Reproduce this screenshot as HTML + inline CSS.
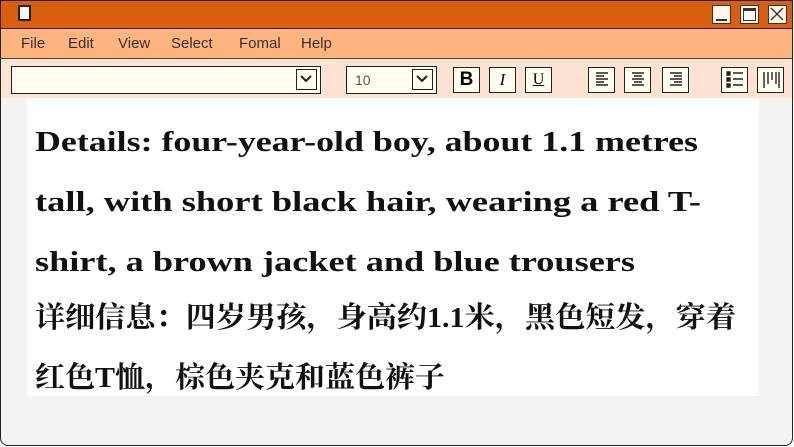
<!DOCTYPE html>
<html><head><meta charset="utf-8"><style>
body{margin:0;width:794px;height:447px;overflow:hidden;background:#fff;font-family:"Liberation Sans",sans-serif}
.win{position:absolute;left:0;top:0;width:791px;height:444px;border:1.5px solid #222;border-radius:0 0 8px 8px;background:#f3f3f1;overflow:hidden}
.title{position:absolute;left:0;top:0;right:0;height:27px;background:#d95f0e;border-bottom:1.5px solid #3a1a05}
.menu{position:absolute;left:0;top:28px;right:0;height:29px;background:#fdb47f;border-bottom:1.5px solid #6a3a1a;font-size:15px;color:#333}
.menu span{position:absolute;top:6px}
.tool{position:absolute;left:0;top:59px;right:0;height:38px;background:#fde3d3}
.box{position:absolute;border:1.5px solid #222;background:#fffff0;box-sizing:border-box}
.btn{position:absolute;top:66px;width:27px;height:26px;border:1.5px solid #222;background:#fffff0;box-sizing:border-box;text-align:center;font-size:17px;line-height:23px}
.wb{position:absolute;top:4px;width:19px;height:19px;background:#fff7ea;border:1.5px solid #333;box-sizing:border-box}
.panel{position:absolute;left:26px;top:97px;width:732px;height:298px;background:#fff}
</style></head><body>
<div class="win">
<div class="title">
<div style="position:absolute;left:17px;top:4px;width:13px;height:16px;background:#fff7e8;border:2px solid #222;border-radius:2px 0 1px 1px;box-sizing:border-box"></div>
<div class="wb" style="left:711px"><div style="position:absolute;left:3px;right:3px;bottom:2px;height:2px;background:#333"></div></div>
<div class="wb" style="left:739px"><div style="position:absolute;left:2px;right:2px;top:2px;height:3px;background:#333"></div><div style="position:absolute;left:2px;right:2px;top:2px;bottom:2px;border:1.5px solid #333"></div></div>
<div class="wb" style="left:767px"><svg width="16" height="16" style="position:absolute;left:0;top:0"><path d="M2 2L14 14M14 2L2 14" stroke="#333" stroke-width="1.3"/></svg></div>
</div>
<div class="menu"><span style="left:20px">File</span><span style="left:67px">Edit</span><span style="left:117px">View</span><span style="left:170px">Select</span><span style="left:238px">Fomal</span><span style="left:300px">Help</span></div>
<div class="tool"></div>
<div class="box" style="left:10px;top:65px;width:310px;height:28px"></div>
<div class="box" style="left:295px;top:68px;width:21px;height:21px"><svg width="18" height="18"><path d="M4 6L9 11L14 6" fill="none" stroke="#222" stroke-width="2"/></svg></div>
<div class="box" style="left:345px;top:65px;width:91px;height:28px;font-size:14px;color:#555;padding:5px 0 0 8px">10</div>
<div class="box" style="left:411px;top:68px;width:21px;height:21px"><svg width="18" height="18"><path d="M4 6L9 11L14 6" fill="none" stroke="#222" stroke-width="2"/></svg></div>
<div class="btn" style="left:452px;font-weight:bold;font-size:19px">B</div>
<div class="btn" style="left:488px;font-family:'Liberation Serif',serif;font-style:italic">I</div>
<div class="btn" style="left:524px;font-family:'Liberation Serif',serif;text-decoration:underline;font-size:16px">U</div>
<div class="btn" style="left:587px"><svg width="24" height="23"><path d="M6 5h12M6 8h8M6 11h12M6 14h8M6 17h12" stroke="#222" stroke-width="1.4"/></svg></div>
<div class="btn" style="left:623px"><svg width="24" height="23"><path d="M6 5h12M8 8h8M6 11h12M8 14h8M6 17h12" stroke="#222" stroke-width="1.4"/></svg></div>
<div class="btn" style="left:661px"><svg width="24" height="23"><path d="M6 5h12M10 8h8M6 11h12M10 14h8M6 17h12" stroke="#222" stroke-width="1.4"/></svg></div>
<div class="btn" style="left:720px"><svg width="24" height="23"><path d="M4 4h3v3h-3zM4 10h3v3h-3zM4 16h3v3h-3zM10 5h10M10 11h10M10 17h10" stroke="#222" stroke-width="1.4" fill="#222"/></svg></div>
<div class="btn" style="left:756px"><svg width="24" height="23"><path d="M5 4v16M9 4v12M13 4v8M17 4v12M20 4v16" stroke="#222" stroke-width="1.4"/></svg></div>
<div class="panel"></div>
<svg width="794" height="447" style="position:absolute;left:0;top:0" font-weight="bold" fill="#111">
<g font-family="'Liberation Serif',serif" font-size="29">
<text x="34" y="150" textLength="663" lengthAdjust="spacingAndGlyphs">Details: four-year-old boy, about 1.1 metres</text>
<text x="34" y="210" textLength="666" lengthAdjust="spacingAndGlyphs">tall, with short black hair, wearing a red T-</text>
<text x="34" y="270" textLength="600" lengthAdjust="spacingAndGlyphs">shirt, a brown jacket and blue trousers</text>
</g>
<g font-family="'Liberation Serif','Noto Serif CJK SC',serif" font-size="29">
<text x="34" y="326" textLength="701" lengthAdjust="spacingAndGlyphs">详细信息：四岁男孩，身高约1.1米，黑色短发，穿着</text>
<text x="34" y="386" textLength="410" lengthAdjust="spacingAndGlyphs">红色T恤，棕色夹克和蓝色裤子</text>
</g>
</svg>
</div>
</body></html>
